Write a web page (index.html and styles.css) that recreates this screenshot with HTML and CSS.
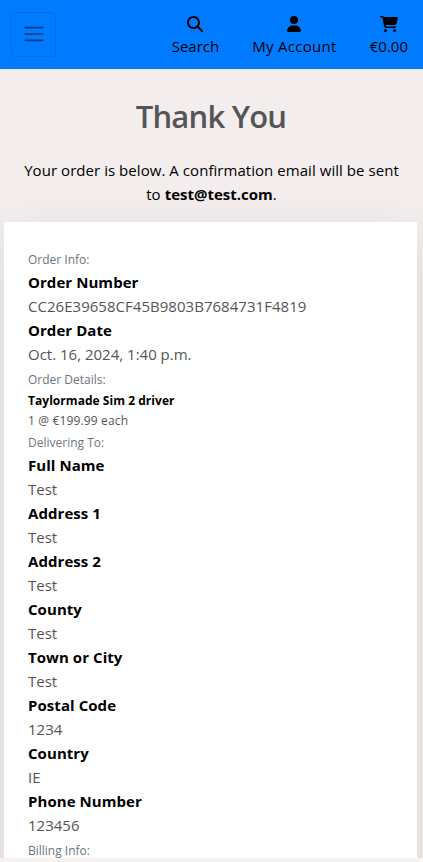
FILE: index.html
```
<!DOCTYPE html>
<html lang="en">
<head>
<meta charset="utf-8">
<title>Thank You</title>
<link rel="stylesheet" href="styles.css">
</head>
<body>
<header class="navbar">
  <button class="toggler" aria-label="Menu"><svg width="24" height="24" viewBox="0 0 30 30"><path d="M4 7h22M4 15h22M4 23h22" stroke="currentColor" stroke-width="2" stroke-linecap="round"/></svg></button>
  <nav class="links">
    <a class="link search"><svg width="16" height="16" viewBox="0 0 512 512"><path d="M416 208c0 45.900-14.900 88.300-40 122.700L502.600 457.400c12.500 12.500 12.500 32.800 0 45.300s-32.800 12.500-45.300 0L330.700 376C296.300 401.100 253.900 416 208 416 93.100 416 0 322.900 0 208S93.100 0 208 0s208 93.100 208 208zM208 352a144 144 0 1 0 0-288 144 144 0 1 0 0 288z"/></svg><span>Search</span></a>
    <a class="link account"><svg width="14" height="16" viewBox="0 0 448 512"><path d="M224 256A128 128 0 1 0 224 0a128 128 0 1 0 0 256zm-45.700 48C79.800 304 0 383.800 0 482.300 0 498.700 13.300 512 29.700 512h388.600c16.400 0 29.700-13.300 29.700-29.700C448 383.800 368.200 304 269.700 304z"/></svg><span>My Account</span></a>
    <a class="link bag"><svg width="18" height="16" viewBox="0 0 576 512"><path d="M0 24C0 10.700 10.700 0 24 0h45.500c22 0 41.500 12.800 50.600 32h411c26.300 0 45.500 25 38.600 50.400l-41 152.300c-8.500 31.400-37 53.300-69.500 53.300H170.700l5.400 28.500c2.200 11.300 12.100 19.500 23.600 19.500H488c13.300 0 24 10.700 24 24s-10.700 24-24 24H199.700c-34.600 0-64.300-24.600-70.700-58.500L77.400 54.500c-.7-3.800-4-6.500-7.900-6.500H24C10.700 48 0 37.300 0 24zm128 440a48 48 0 1 1 96 0 48 48 0 1 1-96 0zm336-48a48 48 0 1 1 0 96 48 48 0 1 1 0-96z"/></svg><span>€0.00</span></a>
  </nav>
</header>
<main>
  <h1>Thank You</h1>
  <p class="intro">Your order is below. A confirmation email will be sent<br>to <strong>test@test.com</strong>.</p>
  <section class="card">
    <small>Order Info:</small>
    <dl>
      <dt>Order Number</dt><dd class="number">CC26E39658CF45B9803B7684731F4819</dd>
      <dt>Order Date</dt><dd>Oct. 16, 2024, 1:40 p.m.</dd>
    </dl>
    <small>Order Details:</small>
    <p class="item name">Taylormade Sim 2 driver</p>
    <p class="item">1 @ €199.99 each</p>
    <small>Delivering To:</small>
    <dl>
      <dt>Full Name</dt><dd>Test</dd>
      <dt>Address 1</dt><dd>Test</dd>
      <dt>Address 2</dt><dd>Test</dd>
      <dt>County</dt><dd>Test</dd>
      <dt>Town or City</dt><dd>Test</dd>
      <dt>Postal Code</dt><dd>1234</dd>
      <dt>Country</dt><dd>IE</dd>
      <dt>Phone Number</dt><dd>123456</dd>
    </dl>
    <small>Billing Info:</small>
  </section>
</main>
<footer></footer>
</body>
</html>
```
FILE: styles.css
```
* { box-sizing: border-box; }
body {
  margin: 0;
  height: 862px;
  overflow: hidden;
  display: flex;
  flex-direction: column;
  background: #f3eded;
  color: #000;
  font: 400 15px/24px "Open Sans", "Noto Sans", sans-serif;
}
.navbar {
  height: 69px;
  flex: none;
  display: flex;
  justify-content: space-between;
  background: #007bff;
  padding: 12px 15px 0 11px;
}
.toggler {
  width: 45px;
  height: 45px;
  padding: 0;
  display: flex;
  align-items: center;
  justify-content: center;
  background: none;
  border: 1px solid rgba(0, 0, 0, .1);
  border-radius: 4px;
  color: rgba(0, 0, 0, .5);
}
.toggler svg { margin-top: -1px; }
.links { display: flex; gap: 33px; padding-top: 4px; }
.link {
  display: flex;
  flex-direction: column;
  align-items: center;
}
.link span { line-height: 24px; margin-top: 2px; white-space: nowrap; }
.account { letter-spacing: .3px; }
main { height: 789px; flex: none; overflow: hidden; }
h1 {
  margin: 26px 1px 0 0;
  text-align: center;
  color: #555;
  font-size: 31px;
  font-weight: 600;
  line-height: 42px;
  letter-spacing: -.8px;
}
.intro { margin: 21px 0 0; text-align: center; white-space: nowrap; letter-spacing: .05px; }
.intro strong { font-weight: 700; letter-spacing: 0; }
.card {
  margin: 16px 6px 0 4px;
  padding: 24px;
  height: 700px;
  background: #fff;
  box-shadow: 0 16px 48px rgba(0, 0, 0, .1);
}
.card small {
  display: block;
  height: 24px;
  line-height: 28px;
  font-size: 12px;
  color: #6c757d;
}
dl { margin: 0; }
dt { font-weight: 700; letter-spacing: .06px; }
dd { margin: 0; color: #555; }
.number { letter-spacing: .03px; }
.item { margin: 0; font-size: 12px; line-height: 22px; height: 19.500px; color: #555; letter-spacing: .15px; }
.item.name { font-weight: 700; color: #000; letter-spacing: .04px; }
footer { flex: 1; background: #f8f3f3; }
```
